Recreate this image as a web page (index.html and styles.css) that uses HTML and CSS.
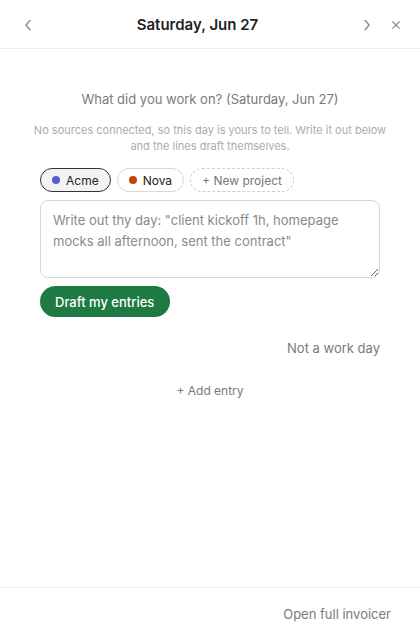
FILE: index.html
```html
<!DOCTYPE html>
<html>
<head>
    <title>Saturday, Jun 27</title>
    <meta name="viewport" content="width=device-width, initial-scale=1.0">
    <link rel="stylesheet" href="styles.css">
</head>
<body>
    <div class="panel">
        <div class="header">
            <button class="icon-btn prev">&lsaquo;</button>
            <h1>Saturday, Jun 27</h1>
            <button class="icon-btn next">&rsaquo;</button>
            <button class="icon-btn close">&times;</button>
        </div>

        <div class="content">
            <p class="question">What did you work on? (Saturday, Jun 27)</p>
            <p class="hint">No sources connected, so this day is yours to tell. Write it out below and the lines draft themselves.</p>

            <div class="chips">
                <button class="chip active"><span class="dot acme"></span>Acme</button>
                <button class="chip"><span class="dot nova"></span>Nova</button>
                <button class="chip new">+ New project</button>
            </div>

            <textarea class="day-input" placeholder="Write out thy day: &quot;client kickoff 1h, homepage mocks all afternoon, sent the contract&quot;"></textarea>

            <div class="actions">
                <button class="draft-btn">Draft my entries</button>
            </div>

            <div class="off-row">
                <button class="link-btn">Not a work day</button>
            </div>

            <div class="add-row">
                <button class="link-btn small">+ Add entry</button>
            </div>
        </div>

        <div class="footer">
            <button class="link-btn">Open full invoicer</button>
        </div>
    </div>
</body>
</html>
```

FILE: styles.css
```css
* {
    box-sizing: border-box;
}
body {
    margin: 0;
    background-color: #fff;
    font-family: Inter, "Noto Sans", Arial, sans-serif;
    color: #222;
}
button {
    font-family: inherit;
    background: none;
    border: none;
    cursor: pointer;
    padding: 0;
}
.panel {
    display: flex;
    flex-direction: column;
    height: 100vh;
}
.header {
    height: 49px;
    display: flex;
    align-items: center;
    padding: 0 14px 0 18px;
    border-bottom: 1px solid #ececec;
    flex-shrink: 0;
}
.header h1 {
    flex: 1;
    margin: 0;
    text-align: center;
    font-size: 15px;
    font-weight: 600;
    color: #1f1f1f;
}
.icon-btn {
    width: 20px;
    height: 24px;
    color: #8a8a8a;
    font-size: 22px;
    line-height: 22px;
    text-align: center;
    font-weight: 300;
}
.icon-btn.next {
    margin-right: 9px;
}
.icon-btn.close {
    font-size: 18px;
}
.content {
    flex: 1;
    padding: 42px 40px 0 40px;
}
.question {
    margin: 0;
    text-align: center;
    font-size: 13px;
    color: #7a7a7a;
}
.hint {
    margin: 15px -12px 0;
    text-align: center;
    font-size: 11px;
    line-height: 16px;
    color: #ababab;
}
.chips {
    display: flex;
    gap: 6px;
    margin-top: 14px;
}
.chip {
    display: flex;
    align-items: center;
    gap: 6px;
    height: 24px;
    padding: 0 11px;
    border: 1px solid #d8d8d8;
    border-radius: 12px;
    font-size: 12px;
    color: #222;
    background-color: #fff;
}
.chip.active {
    border-color: #333;
    background-color: #f3f3f5;
}
.chip.new {
    border: 1px dashed #cfcfcf;
    color: #777;
}
.dot {
    width: 8px;
    height: 8px;
    border-radius: 50%;
}
.dot.acme {
    background-color: #5b5bd6;
}
.dot.nova {
    background-color: #c8420c;
}
.day-input {
    display: block;
    width: 100%;
    height: 78px;
    margin-top: 8px;
    padding: 9px 12px;
    border: 1px solid #d6d6d6;
    border-radius: 8px;
    font-family: inherit;
    font-size: 13px;
    line-height: 21px;
    color: #222;
    resize: vertical;
}
.day-input::placeholder {
    color: #8a8a8a;
}
.actions {
    margin-top: 8px;
}
.draft-btn {
    height: 31px;
    padding: 0 16px 0 15px;
    border-radius: 16px;
    background-color: #1e7a43;
    color: #fff;
    font-size: 13px;
    font-weight: 500;
}
.off-row {
    display: flex;
    justify-content: flex-end;
    margin-top: 23px;
}
.link-btn {
    font-size: 13px;
    color: #7a7a7a;
}
.link-btn.small {
    font-size: 12px;
}
.add-row {
    display: flex;
    justify-content: center;
    margin-top: 27px;
}
.footer {
    height: 53px;
    display: flex;
    align-items: center;
    justify-content: flex-end;
    padding: 0 29px 0 0;
    border-top: 1px solid #eeeeee;
    flex-shrink: 0;
}
```
